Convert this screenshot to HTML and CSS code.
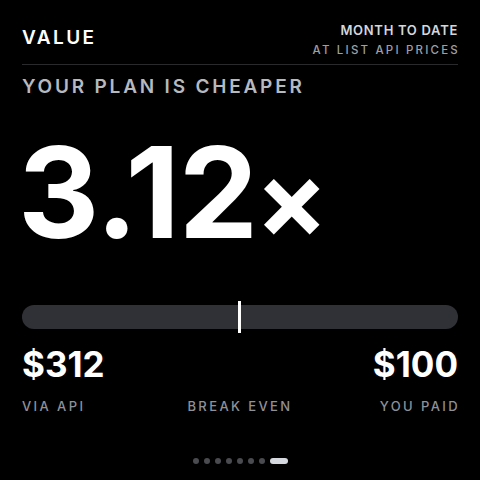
FILE: index.html
```html
<!DOCTYPE html>
<html>
<head>
<meta charset="utf-8">
<link rel="stylesheet" href="styles.css">
</head>
<body>
<div class="screen">
  <header class="head">
    <div class="title">VALUE</div>
    <div class="meta">
      <div class="meta-top">MONTH TO DATE</div>
      <div class="meta-sub">AT LIST API PRICES</div>
    </div>
  </header>
  <div class="subtitle">YOUR PLAN IS CHEAPER</div>
  <div class="big">3.12<span class="times">×</span></div>
  <div class="bar"><div class="marker"></div></div>
  <div class="amounts">
    <div class="amt">$312</div>
    <div class="amt">$100</div>
  </div>
  <div class="labels">
    <div class="l-left">VIA API</div>
    <div class="l-mid">BREAK EVEN</div>
    <div class="l-right">YOU PAID</div>
  </div>
  <div class="dots">
    <span class="dot"></span><span class="dot"></span><span class="dot"></span><span class="dot"></span><span class="dot"></span><span class="dot"></span><span class="dot"></span><span class="pill"></span>
  </div>
</div>
</body>
</html>
```
FILE: styles.css
```css
html, body {
  margin: 0;
  padding: 0;
  background: #000;
}
.screen {
  width: 480px;
  height: 480px;
  box-sizing: border-box;
  padding: 22px 22px 0 22px;
  font-family: "Inter", "Noto Sans", sans-serif;
  color: #fff;
  display: flex;
  flex-direction: column;
}
.head {
  display: flex;
  justify-content: space-between;
  align-items: flex-start;
  border-bottom: 1px solid #2a2a2c;
  padding-bottom: 6px;
}
.title {
  font-size: 19px;
  font-weight: 600;
  letter-spacing: 2.4px;
  margin-top: 4px;
  line-height: 23px;
}
.meta {
  text-align: right;
}
.meta-top {
  font-size: 13px;
  font-weight: 600;
  color: #d4d6dc;
  letter-spacing: 0.7px;
  line-height: 16px;
}
.meta-sub {
  font-size: 11.5px;
  font-weight: 500;
  color: #9c9fa7;
  letter-spacing: 2.2px;
  line-height: 16px;
  margin-top: 4px;
  margin-right: -2px;
}
.subtitle {
  margin-top: 10px;
  font-size: 19px;
  font-weight: 600;
  letter-spacing: 2.8px;
  color: #b6b9c0;
  line-height: 23px;
}
.big {
  margin-top: 32px;
  font-size: 126px;
  font-weight: 700;
  letter-spacing: -1px;
  line-height: 124px;
  margin-left: -4px;
}
.times {
  font-size: 108px;
  margin-left: -2px;
}
.bar {
  margin-top: 44px;
  height: 24px;
  border-radius: 12px;
  background: #303136;
  position: relative;
}
.marker {
  position: absolute;
  left: 216px;
  top: -4px;
  width: 3px;
  height: 32px;
  background: #fff;
}
.amounts {
  display: flex;
  justify-content: space-between;
  margin-top: 15px;
  font-size: 35px;
  font-weight: 700;
  line-height: 40px;
  letter-spacing: 0;
}
.labels {
  display: grid;
  grid-template-columns: 1fr auto 1fr;
  margin-top: 14px;
  font-size: 13px;
  font-weight: 500;
  letter-spacing: 2.4px;
  color: #8e9199;
  line-height: 16px;
}
.l-mid {
  text-align: center;
}
.l-right {
  text-align: right;
  margin-right: -2px;
}
.dots {
  display: flex;
  justify-content: center;
  align-items: center;
  gap: 5px;
  margin-top: 44px;
}
.dot {
  width: 6px;
  height: 6px;
  border-radius: 50%;
  background: #4a4b50;
}
.pill {
  width: 18px;
  height: 6px;
  border-radius: 3px;
  background: #d5d8de;
}
```
